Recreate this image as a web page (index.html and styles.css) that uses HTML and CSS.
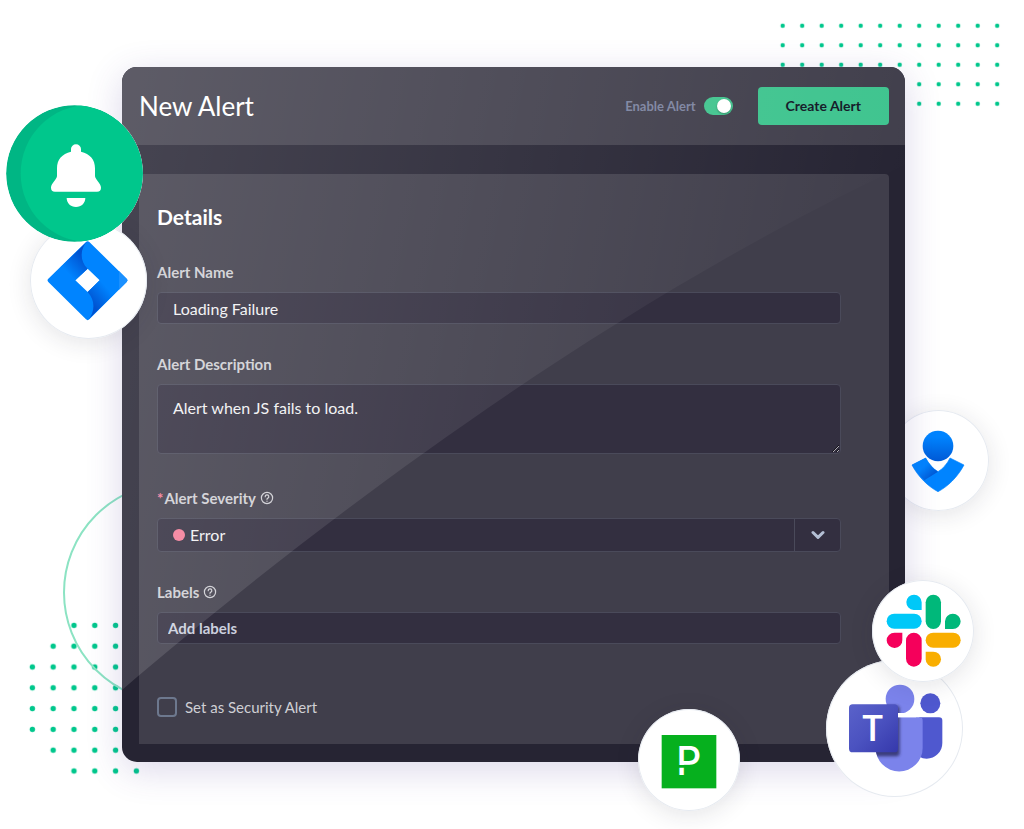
FILE: index.html
```html
<!DOCTYPE html>
<html lang="en">
<head>
<meta charset="utf-8">
<title>New Alert</title>
<meta name="viewport" content="width=device-width, initial-scale=1">
<link rel="stylesheet" href="styles.css">
</head>
<body>
<main class="stage">
  <svg class="decor dots-top" viewBox="0 0 234 98" aria-hidden="true">
    <defs><pattern id="dotA" width="19.5" height="19.5" patternUnits="userSpaceOnUse"><circle cx="9.7" cy="9.7" r="2.2" fill="#00c78c"/></pattern></defs>
    <rect width="234" height="97.5" fill="url(#dotA)"/>
  </svg>
  <svg class="decor dots-bottom" viewBox="0 0 126 168" aria-hidden="true">
    <defs><pattern id="dotB" width="20.8" height="20.8" patternUnits="userSpaceOnUse"><circle cx="10.4" cy="10.4" r="2.7" fill="#00c78c"/></pattern></defs>
    <path d="M41.6 0H104V20.8H124.8V166.4H41.6V145.6H20.8V124.8H0V41.6H20.8V20.8H41.6Z" fill="url(#dotB)"/>
  </svg>
  <div class="decor ring"></div>

  <div class="badge badge-opsgenie">
    <svg viewBox="24 61 303 303" role="img" aria-label="Opsgenie">
      <defs>
        <linearGradient id="og1" x1="0" y1="0" x2="0" y2="1"><stop offset=".2" stop-color="#0084ff"/><stop offset="1" stop-color="#005ad6"/></linearGradient>
        <linearGradient id="og2" x1="110" y1="215" x2="155" y2="262" gradientUnits="userSpaceOnUse"><stop offset=".4" stop-color="#0084ff"/><stop offset="1" stop-color="#005ad6"/></linearGradient>
      </defs>
      <circle cx="174" cy="169" r="46" fill="url(#og1)"/>
      <path d="M137 205 96 226C115 262 145 291 174 306C203 291 233 262 252 226L210 205C202 222 188 238 174 246C160 238 146 222 137 205Z" fill="#0084ff" stroke="#0084ff" stroke-width="2" stroke-linejoin="round"/>
      <path d="M137 205 96 226Q112 252 133 272L174 246C160 238 146 222 137 205Z" fill="url(#og2)"/>
    </svg>
  </div>

  <form class="window">
    <header class="window-header">
      <h1 class="title">New Alert</h1>
      <label class="toggle-label" for="enable">Enable Alert
        <input class="toggle" id="enable" type="checkbox" role="switch" checked>
      </label>
      <button class="create" type="button">Create Alert</button>
    </header>
    <div class="window-body">
      <section class="card">
        <h2 class="card-title">Details</h2>
        <div class="fields">
          <div class="field">
            <label class="label" for="name">Alert Name</label>
            <input class="control" id="name" type="text" value="Loading Failure">
          </div>
          <div class="field field-tall">
            <label class="label" for="description">Alert Description</label>
            <textarea class="control area" id="description">Alert when JS fails to load.</textarea>
          </div>
          <div class="field">
            <label class="label" for="severity"><span class="required">*</span>Alert Severity
              <svg class="help" viewBox="0 0 14 14" aria-hidden="true"><circle cx="7" cy="7" r="5.6"/><path d="M5.2 5.7a1.8 1.7 0 1 1 2.7 1.4Q7 7.5 7 8.3M7 10v.3"/></svg>
            </label>
            <div class="select-wrap">
              <select class="control select" id="severity"><option>Error</option><option>Warning</option><option>Info</option></select>
              <span class="severity-dot"></span>
              <span class="select-arrow"><svg viewBox="0 0 14 10" aria-hidden="true"><path d="M2 2.500 7 7.300 12 2.500"/></svg></span>
            </div>
          </div>
          <div class="field">
            <label class="label" for="labels">Labels
              <svg class="help" viewBox="0 0 14 14" aria-hidden="true"><circle cx="7" cy="7" r="5.6"/><path d="M5.2 5.7a1.8 1.7 0 1 1 2.7 1.4Q7 7.5 7 8.3M7 10v.3"/></svg>
            </label>
            <input class="control tags" id="labels" type="text" placeholder="Add labels">
          </div>
        </div>
        <label class="check-label" for="security"><input class="check" id="security" type="checkbox">Set as Security Alert</label>
      </section>
    </div>
    <svg class="sheen" viewBox="0 0 783 695" preserveAspectRatio="none" aria-hidden="true">
      <defs><linearGradient id="sh" x1="0" y1="0" x2="783" y2="160" gradientUnits="userSpaceOnUse"><stop offset="0" stop-color="#fff" stop-opacity=".15"/><stop offset="1" stop-color="#fff" stop-opacity="0"/></linearGradient></defs>
      <path d="M0 0H783V98C480 240 190 460 0 623Z" fill="url(#sh)"/>
    </svg>
  </form>

  <div class="badge badge-jira">
    <svg viewBox="90 486 351 351" role="img" aria-label="Jira">
      <defs>
        <linearGradient id="j1" x1="250" y1="590" x2="200" y2="635" gradientUnits="userSpaceOnUse"><stop offset="0" stop-color="#0052d0"/><stop offset="1" stop-color="#0084ff"/></linearGradient>
        <linearGradient id="j2" x1="275" y1="732" x2="325" y2="688" gradientUnits="userSpaceOnUse"><stop offset="0" stop-color="#0052d0"/><stop offset="1" stop-color="#0084ff"/></linearGradient>
      </defs>
      <path fill-rule="evenodd" d="M258 546Q263 541 268 546L380 656Q385 661 380 666L268 778Q263 783 258 778L145 666Q140 661 145 656ZM263 626 226 661 263 696 299 661Z" fill="#0084ff"/>
      <path d="M263 543C240 565 238 602 263 626L226 661 182 621Z" fill="url(#j1)"/>
      <path d="M263 781C286 757 286 720 263 696L299 661 345 700Z" fill="url(#j2)"/>
      <path d="M357 633 380 656Q385 661 380 666L357 689Z" fill="#1a90ff"/>
    </svg>
  </div>
  <div class="badge badge-bell">
    <svg viewBox="18 135 411 411" role="img" aria-label="Alert">
      <defs><clipPath id="bc"><circle cx="223.500" cy="340.500" r="205"/></clipPath></defs>
      <circle cx="223.500" cy="340.500" r="205" fill="#00b684"/>
      <circle cx="268" cy="340.500" r="206" fill="#00c78c" clip-path="url(#bc)"/>
      <path d="M213 275V267a15 14 0 0 1 30 0V275C270 282 285 298 285 325V348C285 358 303 370 303 383A12 12 0 0 1 291 395H165A12 12 0 0 1 153 383C153 370 171 358 171 348V325C171 298 186 282 213 275ZM200 414h56c0 15-12 27-28 27s-28-12-28-27z" fill="#fff"/>
    </svg>
  </div>
  <div class="badge badge-teams">
    <svg viewBox="20 299 411 411" role="img" aria-label="Microsoft Teams">
      <defs>
        <linearGradient id="t1" x1="0" y1="0" x2="1" y2="1"><stop offset="0" stop-color="#5a62ca"/><stop offset=".5" stop-color="#4b52c0"/><stop offset="1" stop-color="#3538ab"/></linearGradient>
        <filter id="ts" x="-20%" y="-20%" width="150%" height="150%"><feGaussianBlur stdDeviation="5"/></filter>
        <clipPath id="tb"><circle cx="242" cy="416" r="43"/><path d="M169 471H300a10 10 0 0 1 10 10V563a70 70 0 0 1-141 0Z"/></clipPath>
      </defs>
      <circle cx="333" cy="429" r="30" fill="#4f58cf"/>
      <path d="M300 471H359a10 10 0 0 1 10 10V548a47 47 0 0 1-47 47q-12 0-22-6Z" fill="#4f58cf"/>
      <circle cx="242" cy="416" r="43" fill="#7b83eb"/>
      <path d="M169 471H300a10 10 0 0 1 10 10V563a70 70 0 0 1-141 0Z" fill="#7b83eb"/>
      <g clip-path="url(#tb)"><rect x="94" y="436" width="147" height="152" rx="10" fill="#252756" opacity=".75" filter="url(#ts)"/></g>
      <path d="M230 458h60v13h-60z" fill="#fff"/>
      <rect x="89" y="432" width="147" height="144" rx="11" fill="url(#t1)"/>
      <text x="160" y="543" text-anchor="middle" class="t-mark">T</text>
    </svg>
  </div>
  <div class="badge badge-slack">
    <svg viewBox="154 60 306 306" role="img" aria-label="Slack">
      <g fill="#00c8f8"><rect x="198" y="161" width="105" height="45" rx="22.500"/><path d="M303 150H279a23 23 0 1 1 24-23Z"/></g>
      <g fill="#00b87a"><rect x="315" y="104" width="46" height="103" rx="23"/><path d="M373 207V184a23.500 23 0 1 1 23.500 23Z"/></g>
      <g fill="#f9ae00"><rect x="315" y="218" width="105" height="45" rx="22.500"/><path d="M315 275H338a23 22.500 0 1 1-23 22.500Z"/></g>
      <g fill="#f5005b"><rect x="256" y="218" width="47" height="102" rx="23.500"/><path d="M245 218V240a23.500 23 0 1 1-23.500-22Z"/></g>
    </svg>
  </div>
  <div class="badge badge-pagerduty">
    <svg viewBox="53 58 306 306" role="img" aria-label="PagerDuty">
      <rect x="124" y="136" width="164" height="160" fill="#06b01e"/>
      <text x="168" y="257" class="p-mark">P</text>
      <path d="M170 226h25v8h-25z" fill="#06b01e"/>
    </svg>
  </div>
</main>
</body>
</html>
```
FILE: styles.css
```css
*,
*::before,
*::after {
  box-sizing: border-box;
}

body {
  margin: 0;
  padding: 67px 119px 67px 122px;
  background: #fff;
  font-family: Lato, "Open Sans", sans-serif;
  font-size: 15px;
  line-height: 20px;
  overflow-x: hidden;
}

.stage {
  position: relative;
}

/* Window */
.window {
  position: relative;
  overflow: hidden;
  border-radius: 15px;
  background: #262433;
  box-shadow: 0 8px 36px rgba(76, 56, 150, 0.2);
}

.window-header {
  display: flex;
  align-items: center;
  height: 78px;
  padding: 0 16px 0 17px;
  background: #413f4c;
}

.title {
  margin: 0 auto 0 0;
  color: #fff;
  font-size: 26px;
  font-weight: 400;
  line-height: 32px;
}

.toggle-label {
  display: flex;
  align-items: center;
  gap: 8px;
  margin-right: 25px;
  color: #7d84a0;
  font-size: 13px;
  font-weight: 700;
}

.toggle {
  appearance: none;
  display: flex;
  align-items: center;
  justify-content: flex-end;
  width: 29px;
  height: 18px;
  margin: 0;
  padding: 2px;
  border-radius: 9px;
  background: #42c58f;
}

.toggle::before {
  content: "";
  width: 14px;
  height: 14px;
  border-radius: 50%;
  background: #fff;
  box-shadow: 0 1px 2px rgba(0, 0, 0, 0.3);
}

.toggle:not(:checked) {
  justify-content: flex-start;
  background: #6b6e80;
}

.create {
  height: 38px;
  padding: 0 28px;
  border: 0;
  border-radius: 4px;
  background: #3fc48f;
  color: #131827;
  font: 700 14px/20px Lato, "Open Sans", sans-serif;
}

.window-body {
  padding: 29px 16px 18px 17px;
}

.card {
  padding: 29px 48px 27px 18px;
  border-radius: 4px 4px 0 0;
  background: #403e4b;
}

.card-title {
  margin: 0 0 31px;
  color: #fff;
  font-size: 21px;
  font-weight: 700;
  line-height: 28px;
}

.fields {
  display: grid;
  gap: 30px;
}

.field {
  display: grid;
  gap: 10px;
}

.field-tall {
  padding-bottom: 4px;
}

.label {
  display: flex;
  align-items: center;
  gap: 4px;
  color: #cfcfd4;
  font-size: 15px;
  font-weight: 700;
}

.required {
  margin-right: -3px;
  color: #f57d99;
}

.help {
  width: 14px;
  height: 14px;
  fill: none;
  stroke: #cfcfd4;
  stroke-width: 1.2;
  stroke-linecap: round;
}

.control {
  display: block;
  width: 100%;
  height: 32px;
  margin: 0;
  padding: 0 15px;
  border: 1px solid #4a4a5a;
  border-radius: 4px;
  background: #332f40;
  color: #f1f1f3;
  font: 400 16px/20px Lato, "Open Sans", sans-serif;
}

.area {
  height: 70px;
  padding-top: 13px;
  resize: vertical;
}

.select-wrap {
  position: relative;
}

.select {
  appearance: none;
  height: 34px;
  padding-left: 32px;
}

.severity-dot {
  position: absolute;
  top: 11px;
  left: 16px;
  width: 12px;
  height: 12px;
  border-radius: 50%;
  background: #f57d99;
}

.select-arrow {
  position: absolute;
  inset: 1px 1px 1px auto;
  display: grid;
  place-items: center;
  width: 46px;
  border-left: 1px solid #4a4a5a;
  pointer-events: none;
}

.select-arrow svg {
  width: 14px;
  height: 10px;
  fill: none;
  stroke: #b4bfd4;
  stroke-width: 3;
  stroke-linecap: round;
  stroke-linejoin: round;
}

.tags {
  padding: 0 10px;
  font-size: 15px;
  font-weight: 700;
}

.tags::placeholder {
  color: #cbd0de;
  opacity: 1;
}

.check-label {
  display: flex;
  align-items: center;
  gap: 8px;
  width: fit-content;
  margin-top: 53px;
  color: #cfcfd4;
  font-size: 15px;
}

.check {
  appearance: none;
  width: 20px;
  height: 20px;
  margin: 0;
  border: 2px solid #6d788e;
  border-radius: 4px;
}

.check:checked {
  background: #42c58f;
}

.sheen {
  position: absolute;
  inset: 0;
  width: 100%;
  height: 100%;
  pointer-events: none;
}

/* Decoration behind the window */
.decor {
  position: absolute;
}

.dots-top {
  top: -51px;
  right: -102px;
  width: 234px;
  height: 98px;
}

.dots-bottom {
  bottom: -21px;
  left: -100px;
  width: 126px;
  height: 168px;
}

.ring {
  bottom: 59px;
  left: -59px;
  width: 221px;
  height: 221px;
  border: 2px solid #8ce3c3;
  border-radius: 50%;
}

/* Integration badges around the window */
.badge {
  position: absolute;
  overflow: hidden;
  border-radius: 50%;
  background: #fff;
  box-shadow: inset 0 0 0 1px #e6eaf0, 0 4px 24px rgba(30, 30, 50, 0.12);
}

.badge svg {
  display: block;
  width: 100%;
  height: 100%;
}

.badge-bell {
  top: 38px;
  left: -116px;
  width: 137px;
  height: 137px;
  box-shadow: none;
}

.badge-jira {
  top: 155px;
  left: -92px;
  width: 117px;
  height: 117px;
}

.badge-opsgenie {
  top: 343px;
  right: -84px;
  width: 101px;
  height: 101px;
}

.badge-slack {
  right: -69px;
  bottom: 80px;
  width: 102px;
  height: 102px;
}

.badge-teams {
  right: -58px;
  bottom: -35px;
  width: 137px;
  height: 137px;
  box-shadow: inset 0 0 0 1px #e6eaf0;
}

.badge-pagerduty {
  right: 165px;
  bottom: -49px;
  width: 102px;
  height: 102px;
}

.t-mark {
  fill: #fff;
  font: 600 110px "Open Sans", sans-serif;
}

.p-mark {
  fill: #fff;
  font: 500 117px Inter, sans-serif;
}
```
